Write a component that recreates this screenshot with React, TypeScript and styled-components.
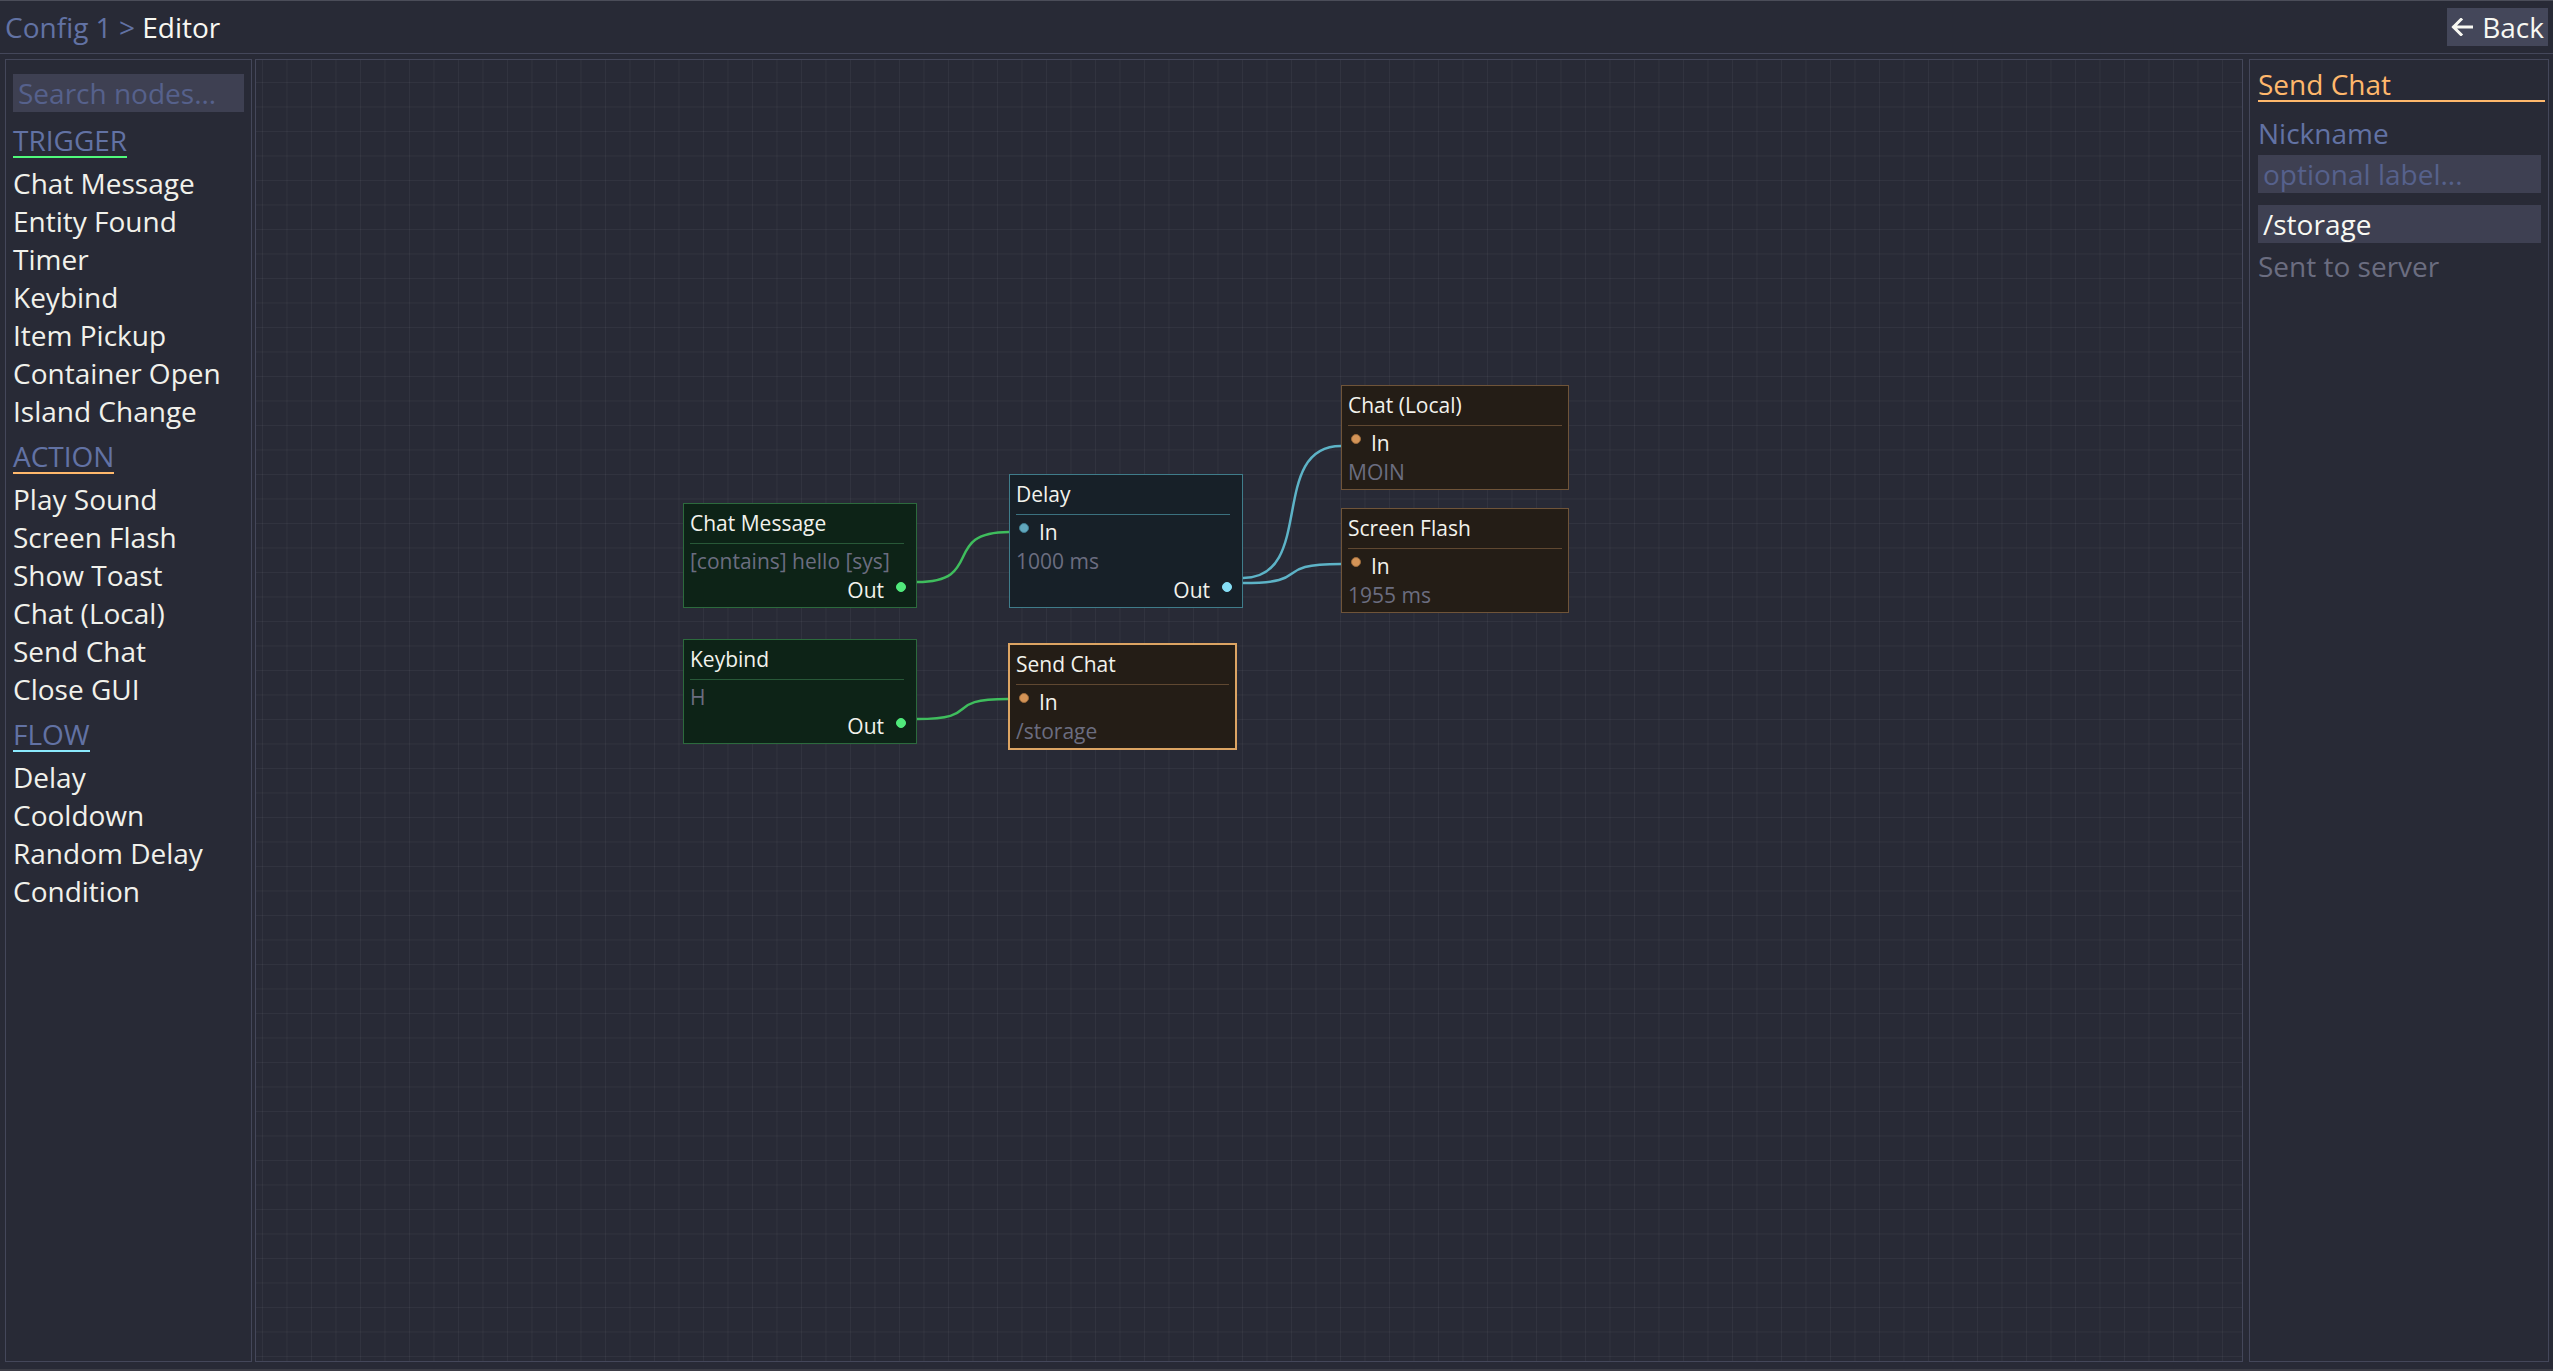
import React from "react";
import styled, { createGlobalStyle, css } from "styled-components";

type Kind = "trigger" | "action" | "flow";

type GraphNode = {
  id: string;
  kind: Kind;
  title: string;
  x: number;
  y: number;
  w: number;
  param: string;
  hasIn?: boolean;
  hasOut?: boolean;
  selected?: boolean;
};

type Wire = {
  kind: Kind;
  x1: number;
  y1: number;
  x2: number;
  y2: number;
};

const palette: Record<Kind, { bg: string; border: string; sep: string; inDot: string; inRing: string; outDot: string; wire: string; accent: string }> = {
  trigger: {
    bg: "#0d2317",
    border: "#2c6a3d",
    sep: "#285838",
    inDot: "#50e97b",
    inRing: "#2f8a4a",
    outDot: "#50e97b",
    wire: "#3fbd5d",
    accent: "#50fa7b",
  },
  flow: {
    bg: "#172028",
    border: "#3f7c8a",
    sep: "#3b717f",
    inDot: "#62a8be",
    inRing: "#3f7d90",
    outDot: "#86def5",
    wire: "#5db3c7",
    accent: "#8be9fd",
  },
  action: {
    bg: "#241d16",
    border: "#6f5439",
    sep: "#604831",
    inDot: "#d49457",
    inRing: "#9a6a3b",
    outDot: "#ffb86c",
    wire: "#d49457",
    accent: "#ffb86c",
  },
};

const GlobalStyle = createGlobalStyle`
  html, body {
    margin: 0;
    padding: 0;
    background: #282a36;
  }
  body {
    font-family: "Open Sans", "Noto Sans", sans-serif;
    color: #f8f8f2;
  }
  * {
    box-sizing: border-box;
  }
`;

const Screen = styled.div`
  height: 100vh;
  display: flex;
  flex-direction: column;
  background: #282a36;
  border-top: 1px solid #4b4d59;
  border-bottom: 2px solid #3c3d46;
  overflow: hidden;
`;

const TopBar = styled.header`
  height: 53px;
  flex: none;
  display: flex;
  align-items: center;
  justify-content: space-between;
  padding: 0 5px;
  border-bottom: 1px solid #44475a;
  font-size: 28px;
  line-height: 38px;
`;

const Crumb = styled.span`
  color: #6272a4;
`;

const CrumbCurrent = styled.span`
  color: #f8f8f2;
`;

const BackButton = styled.button`
  display: flex;
  align-items: center;
  gap: 9px;
  height: 38px;
  padding: 0 4px;
  border: none;
  border-radius: 0;
  background: #44475a;
  color: #f8f8f2;
  font-family: inherit;
  font-size: 28px;
  line-height: 38px;
`;

const Main = styled.div`
  flex: 1;
  min-height: 0;
  display: flex;
  padding: 5px 4px 7px 5px;
`;

const Sidebar = styled.aside`
  width: 247px;
  flex: none;
  display: flex;
  flex-direction: column;
  align-items: flex-start;
  padding: 14px 7px 13px;
  border: 1px solid #44475a;
  font-size: 28px;
`;

const FieldInput = styled.input<{ $wide?: boolean }>`
  display: block;
  width: ${(p) => (p.$wide ? "100%" : "calc(100% - 4px)")};
  height: 38px;
  padding: 0 5px;
  border: none;
  outline: none;
  background: #3e4052;
  color: #f8f8f2;
  font-family: inherit;
  font-size: 28px;
  line-height: 38px;

  &::placeholder {
    color: #56618c;
  }
`;

const SearchBox = styled(FieldInput)`
  flex: none;
  margin-bottom: 2px;
`;

const SectionLabel = styled.div<{ $accent: string }>`
  margin: 10px 0 6px;
  line-height: 32px;
  color: #6272a4;
  border-bottom: 2px solid ${(p) => p.$accent};
`;

const PaletteItem = styled.div`
  line-height: 38px;
  color: #f1f1eb;
  white-space: nowrap;
`;

const Canvas = styled.section`
  flex: 1;
  min-width: 0;
  position: relative;
  margin: 0 6px 0 3px;
  border: 1px solid #44475a;
  overflow: hidden;
  background-color: #282a36;
  background-image: linear-gradient(to right, rgba(255, 255, 255, 0.045) 1px, transparent 1px),
    linear-gradient(to bottom, rgba(255, 255, 255, 0.045) 1px, transparent 1px);
  background-size: 24.5px 24.5px;
  background-position: 6px 22px;
`;

const WireLayer = styled.svg`
  position: absolute;
  inset: 0;
  width: 100%;
  height: 100%;
  pointer-events: none;
`;

const NodeBox = styled.div<{ $x: number; $y: number; $w: number; $kind: Kind; $selected?: boolean }>`
  position: absolute;
  left: ${(p) => p.$x}px;
  top: ${(p) => p.$y}px;
  width: ${(p) => p.$w}px;
  padding: 4px 6px 2px;
  background: ${(p) => palette[p.$kind].bg};
  border: 1px solid ${(p) => palette[p.$kind].border};
  font-size: 21px;
  color: #f2f2ec;
  ${(p) =>
    p.$selected &&
    css`
      border-color: #dca463;
      box-shadow: 0 0 0 1px #dca463;
    `}
`;

const NodeTitle = styled.div<{ $kind: Kind; $hasOut?: boolean }>`
  line-height: 30px;
  padding-bottom: 5px;
  margin-right: ${(p) => (p.$hasOut ? 6 : 0)}px;
  border-bottom: 1px solid ${(p) => palette[p.$kind].sep};
  white-space: nowrap;
`;

const NodeBody = styled.div`
  padding-top: 3px;
`;

const PortRow = styled.div<{ $side: "in" | "out" }>`
  display: flex;
  align-items: flex-start;
  line-height: 29px;
  ${(p) =>
    p.$side === "in"
      ? css`
          gap: 10px;
          padding-left: 3px;
        `
      : css`
          justify-content: flex-end;
          gap: 12px;
          padding-right: 4px;
        `}
`;

const PortDot = styled.span<{ $fill: string; $ring: string; $offset: number }>`
  width: 10px;
  height: 10px;
  flex: none;
  margin-top: ${(p) => p.$offset}px;
  border-radius: 50%;
  background: ${(p) => p.$fill};
  border: 1px solid ${(p) => p.$ring};
`;

const ParamText = styled.div`
  line-height: 29px;
  color: #6b6d80;
  white-space: nowrap;
`;

const Inspector = styled.aside`
  width: 300px;
  flex: none;
  padding: 8px 3px 0 8px;
  border: 1px solid #44475a;
  font-size: 28px;
`;

const InspectorTitle = styled.div`
  line-height: 32px;
  color: #ffb86c;
  border-bottom: 2px solid #ffb86c;
  margin-bottom: 12px;
`;

const FieldLabel = styled.div`
  line-height: 38px;
  color: #6272a4;
  margin-bottom: 3px;
`;

const FieldGap = styled.div`
  height: 12px;
`;

const Hint = styled.div`
  margin-top: 4px;
  line-height: 38px;
  color: #6b6d80;
`;

const sections: { label: string; accent: string; items: string[] }[] = [
  {
    label: "TRIGGER",
    accent: palette.trigger.accent,
    items: ["Chat Message", "Entity Found", "Timer", "Keybind", "Item Pickup", "Container Open", "Island Change"],
  },
  {
    label: "ACTION",
    accent: palette.action.accent,
    items: ["Play Sound", "Screen Flash", "Show Toast", "Chat (Local)", "Send Chat", "Close GUI"],
  },
  {
    label: "FLOW",
    accent: palette.flow.accent,
    items: ["Delay", "Cooldown", "Random Delay", "Condition"],
  },
];

const nodes: GraphNode[] = [
  { id: "chat", kind: "trigger", title: "Chat Message", x: 427, y: 443, w: 234, param: "[contains] hello [sys]", hasOut: true },
  { id: "delay", kind: "flow", title: "Delay", x: 753, y: 414, w: 234, param: "1000 ms", hasIn: true, hasOut: true },
  { id: "local", kind: "action", title: "Chat (Local)", x: 1085, y: 325, w: 228, param: "MOIN", hasIn: true },
  { id: "flash", kind: "action", title: "Screen Flash", x: 1085, y: 448, w: 228, param: "1955 ms", hasIn: true },
  { id: "key", kind: "trigger", title: "Keybind", x: 427, y: 579, w: 234, param: "H", hasOut: true },
  { id: "send", kind: "action", title: "Send Chat", x: 753, y: 584, w: 227, param: "/storage", hasIn: true, selected: true },
];

const wires: Wire[] = [
  { kind: "trigger", x1: 661, y1: 522, x2: 753, y2: 472 },
  { kind: "trigger", x1: 661, y1: 659, x2: 752, y2: 639 },
  { kind: "flow", x1: 987, y1: 518, x2: 1085, y2: 386 },
  { kind: "flow", x1: 987, y1: 523, x2: 1085, y2: 504 },
];

const wirePath = (w: Wire) => {
  const d = (w.x2 - w.x1) * 0.75;
  return `M${w.x1} ${w.y1} C${w.x1 + d} ${w.y1}, ${w.x2 - d} ${w.y2}, ${w.x2} ${w.y2}`;
};

const BackArrow = () => (
  <svg width="22" height="18" viewBox="0 0 22 18" fill="none">
    <path d="M21 9H3M10 1.5L2.5 9L10 16.5" stroke="#f8f8f2" strokeWidth="3" strokeLinecap="square" />
  </svg>
);

const NodeCard: React.FC<{ node: GraphNode }> = ({ node }) => {
  const c = palette[node.kind];
  return (
    <NodeBox $x={node.x} $y={node.y} $w={node.w} $kind={node.kind} $selected={node.selected}>
      <NodeTitle $kind={node.kind} $hasOut={node.hasOut}>
        {node.title}
      </NodeTitle>
      <NodeBody>
        {node.hasIn && (
          <PortRow $side="in">
            <PortDot $fill={c.inDot} $ring={c.inRing} $offset={5} />
            <span>In</span>
          </PortRow>
        )}
        <ParamText>{node.param}</ParamText>
        {node.hasOut && (
          <PortRow $side="out">
            <span>Out</span>
            <PortDot $fill={c.outDot} $ring={c.outDot} $offset={6} />
          </PortRow>
        )}
      </NodeBody>
    </NodeBox>
  );
};

export default function App() {
  return (
    <>
      <GlobalStyle />
      <Screen>
        <TopBar>
          <div>
            <Crumb>Config 1 &gt; </Crumb>
            <CrumbCurrent>Editor</CrumbCurrent>
          </div>
          <BackButton>
            <BackArrow />
            Back
          </BackButton>
        </TopBar>
        <Main>
          <Sidebar>
            <SearchBox $wide placeholder="Search nodes..." />
            {sections.map((s) => (
              <React.Fragment key={s.label}>
                <SectionLabel $accent={s.accent}>{s.label}</SectionLabel>
                {s.items.map((item) => (
                  <PaletteItem key={item}>{item}</PaletteItem>
                ))}
              </React.Fragment>
            ))}
          </Sidebar>
          <Canvas>
            <WireLayer>
              {wires.map((w, i) => (
                <path key={i} d={wirePath(w)} stroke={palette[w.kind].wire} strokeWidth={2.5} fill="none" />
              ))}
            </WireLayer>
            {nodes.map((n) => (
              <NodeCard key={n.id} node={n} />
            ))}
          </Canvas>
          <Inspector>
            <InspectorTitle>Send Chat</InspectorTitle>
            <FieldLabel>Nickname</FieldLabel>
            <FieldInput placeholder="optional label..." />
            <FieldGap />
            <FieldInput defaultValue="/storage" />
            <Hint>Sent to server</Hint>
          </Inspector>
        </Main>
      </Screen>
    </>
  );
}
